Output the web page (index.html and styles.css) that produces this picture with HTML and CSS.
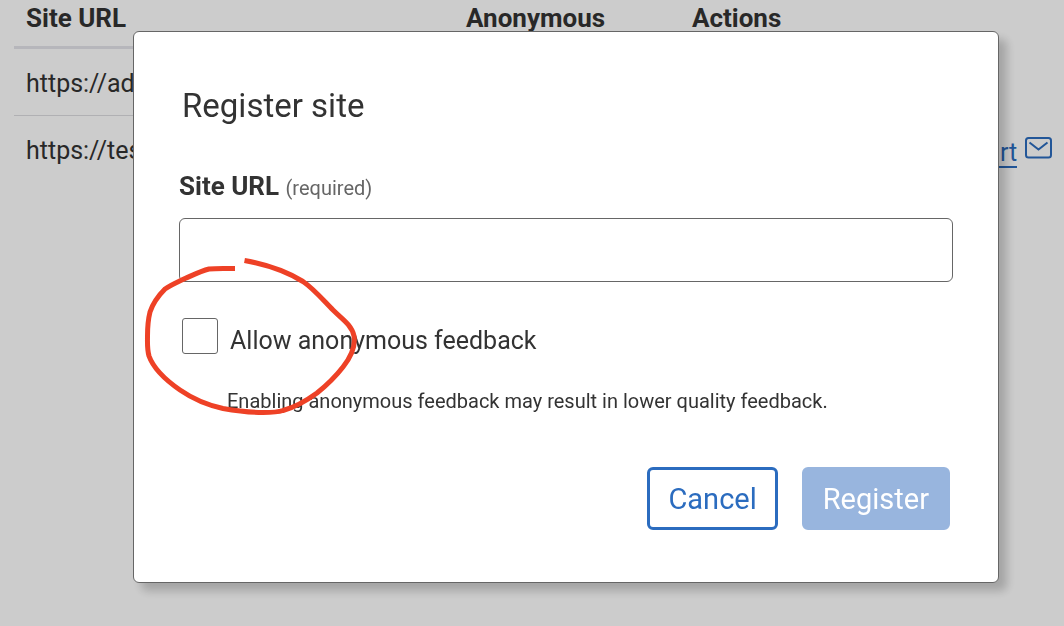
FILE: index.html
```html
<!DOCTYPE html>
<html lang="en">
<head>
<meta charset="utf-8">
<title>Register site</title>
<link rel="stylesheet" href="styles.css">
</head>
<body>
<main class="page">
  <table class="sites">
    <colgroup><col class="col-url"><col class="col-anon"><col></colgroup>
    <thead>
      <tr><th>Site URL</th><th>Anonymous</th><th>Actions</th></tr>
    </thead>
    <tbody>
      <tr><td>https://ad</td><td></td><td></td></tr>
      <tr>
        <td>https://tes</td><td></td>
        <td>
          <div class="actions">
            <a class="report" href="#">rt</a>
            <svg class="mail" viewBox="0 0 28 22" aria-hidden="true"><rect x="1" y="1" width="25" height="19.5" rx="2.5"/><path d="M4.5 5.5 13.5 12.5 22.5 5.5"/></svg>
          </div>
        </td>
      </tr>
    </tbody>
  </table>
</main>
<div class="backdrop">
  <form class="dialog" role="dialog" aria-modal="true" aria-labelledby="dialog-title">
    <h1 class="title" id="dialog-title">Register site</h1>
    <label class="label" for="url">Site URL <span class="required">(required)</span></label>
    <input class="field" id="url" type="text" required>
    <div class="option">
      <input class="check" id="anon" type="checkbox" aria-describedby="hint">
      <label class="check-label" for="anon">Allow anonymous feedback</label>
    </div>
    <p class="hint" id="hint">Enabling anonymous feedback may result in lower quality feedback.</p>
    <div class="buttons">
      <button class="button cancel" type="button">Cancel</button>
      <button class="button register" type="submit" disabled>Register</button>
    </div>
    <svg class="mark" viewBox="134 32 240 400" aria-hidden="true"><path d="M244.5 260.5C264 264 286 271 303 281.500C314 289 324 301 333 310C341 318 352 325 354 336C356 348 350 358 343 367C336 376 327 385 317 393C306 401 296 407 283 410.500C277 412.500 270 412.500 263 412.500C250 412.500 237 411 223 408.500C207 405 193 399 180 390C167 381 154 370 149 356C147 349 147.500 343 147.500 336C147.500 328 148 320 150 312C153 303 159 295 165 289C171 285 178 282 185 278.500C193 275 201 271 209 269C217 268 226 268.500 235 268.500"/></svg>
  </form>
</div>
</body>
</html>
```
FILE: styles.css
```css
* { box-sizing: border-box; }

body {
  margin: 0;
  min-height: 100vh;
  overflow: hidden;
  background: #fff;
  color: #333;
  font-family: Roboto, "Liberation Sans", sans-serif;
  font-size: 25px;
  line-height: 32px;
}

.page { padding: 0 80px 0 14px; }

.sites {
  width: 100%;
  table-layout: fixed;
  border-collapse: collapse;
}
.col-url { width: 440px; }
.col-anon { width: 226px; }

th, td {
  padding: 0 12px;
  text-align: left;
  white-space: nowrap;
}
th {
  height: 47px;
  padding-top: 2px;
  border-bottom: 3px solid #e4e4ea;
  font-size: 26px;
  font-weight: 700;
  vertical-align: top;
}
td { height: 68px; padding-top: 4px; border-bottom: 1px solid #dcdce0; }
tr:last-child td { border-bottom: 0; }

.actions {
  display: flex;
  align-items: center;
  gap: 8px;
  padding-left: 305px;
}
.report {
  padding-left: 3px;
  margin-top: 6px;
  color: #2b6cbf;
  text-decoration: none;
  border-bottom: 2px solid;
  line-height: 26px;
}
.mail {
  flex: none;
  width: 28px;
  height: 22px;
  margin-bottom: 6px;
  fill: none;
  stroke: #2b6cbf;
  stroke-width: 2;
}

.backdrop {
  position: fixed;
  inset: 0;
  padding: 31px 65px 0 133px;
  background: rgba(0, 0, 0, .2);
}

.dialog {
  position: relative;
  display: flex;
  flex-direction: column;
  padding: 52px 45px;
  background: #fff;
  border: 1px solid #666;
  border-radius: 6px;
  box-shadow: 8px 8px 10px rgba(0, 0, 0, .2);
}

.title {
  margin: 0 0 40px 3px;
  font-size: 33px;
  font-weight: 400;
  line-height: 44px;
}

.label { margin-bottom: 12px; font-size: 26px; font-weight: 700; line-height: 36px; }
.required { color: #666; font-size: 20px; font-weight: 400; }

.field {
  width: 100%;
  height: 64px;
  padding: 0 16px;
  border: 1px solid #666;
  border-radius: 6px;
  background: #fff;
  font: inherit;
}

.option {
  display: flex;
  align-items: flex-start;
  gap: 12px;
  margin: 36px 0 0 3px;
}
.check {
  appearance: none;
  flex: none;
  width: 36px;
  height: 36px;
  margin: 0;
  border: 1px solid #666;
  border-radius: 3px;
  background: #fff;
}
.check-label { padding-top: 7px; }

.hint {
  margin: 32px 0 0 48px;
  font-size: 20px;
  line-height: 24px;
}

.buttons {
  display: flex;
  justify-content: flex-end;
  gap: 24px;
  margin: 54px 3px 0 0;
}
.button {
  height: 63px;
  padding: 0 18px;
  border: 3px solid #2b6cbf;
  border-radius: 6px;
  background: #fff;
  color: #2b6cbf;
  font: inherit;
  font-size: 29px;
}
.register {
  border-color: #98b5de;
  background: #98b5de;
  color: #fff;
}

.mark {
  position: absolute;
  top: 0;
  left: 0;
  width: 240px;
  height: 400px;
  fill: none;
  stroke: #ee4126;
  stroke-width: 5;
  pointer-events: none;
}
```
